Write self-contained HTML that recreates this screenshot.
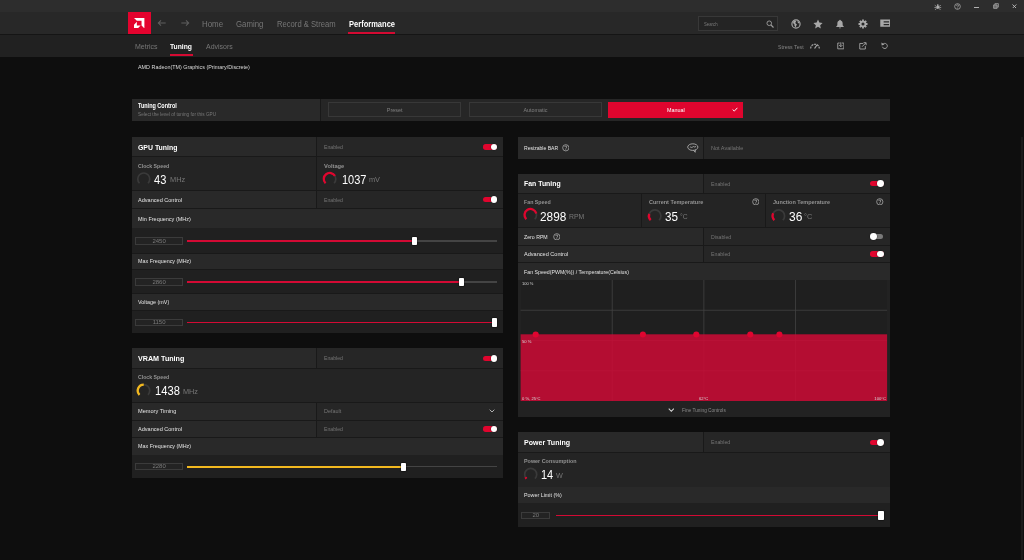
<!DOCTYPE html><html lang="en"><head><meta charset="utf-8"><title>AMD Software - Performance Tuning</title><style>

html,body{margin:0;padding:0;background:#0e0e0e;}
body{width:1024px;height:560px;overflow:hidden;position:relative;font-family:"Liberation Sans", sans-serif;}
#app{position:absolute;left:0;top:0;width:1024px;height:560px;will-change:transform;transform:translateZ(0);}
.b{position:absolute;display:block;}
.t{position:absolute;white-space:nowrap;line-height:1;display:block;transform-origin:0 50%;}

</style></head><body><div id="app">
<div class="b" style="left:0.00px;top:0.00px;width:1024.00px;height:12.30px;background:#2d2d2d;"></div>
<div class="b" style="left:0.00px;top:12.30px;width:1024.00px;height:21.70px;background:#282828;"></div>
<div class="b" style="left:0.00px;top:34.00px;width:1024.00px;height:1.20px;background:#151515;"></div>
<div class="b" style="left:0.00px;top:35.20px;width:1024.00px;height:22.30px;background:#212121;"></div>
<div class="b" style="left:127.90px;top:12.30px;width:23.20px;height:21.70px;background:#e4032e;"></div>
<svg class="b" style="left:134.2px;top:18.1px" width="10.4" height="10.4" viewBox="0 0 10 10"><path fill="#fff" d="M0,0H10V10L7.26,7.26V2.74H2.74Z"/><path fill="#fff" d="M2.74,3.63L0,6.38V10H3.62L6.37,7.25H2.74Z"/></svg>
<svg class="b" style="left:156.90px;top:18.40px" width="10" height="10" viewBox="-5 -5 10 10"><path fill="none" stroke="#5e5e5e" stroke-width="1.05" d="M3.7,0H-3.7M-1.0,-2.7L-3.7,0L-1.0,2.7"/></svg>
<svg class="b" style="left:179.50px;top:18.40px" width="10" height="10" viewBox="-5 -5 10 10"><path fill="none" stroke="#5e5e5e" stroke-width="1.05" d="M-3.7,0H3.7M1.0,-2.7L3.7,0L1.0,2.7"/></svg>
<div class="b" style="left:348.30px;top:32.00px;width:46.50px;height:1.70px;background:#d40a32;"></div>
<div class="b" style="left:169.60px;top:54.40px;width:23.40px;height:1.60px;background:#d40a32;"></div>
<div class="b" style="left:698.2px;top:16.2px;width:79.6px;height:14.7px;box-sizing:border-box;border:1px solid #383838;background:#242424"></div>
<svg class="b" style="left:765.60px;top:19.60px" width="8.00" height="8.00" viewBox="0 0 16 16"><circle cx="6.5" cy="6.5" r="4.6" fill="none" stroke="#9a9a9a" stroke-width="1.9"/><path d="M10,10L15,15" stroke="#9a9a9a" stroke-width="2.3"/></svg>
<svg class="b" style="left:790.50px;top:18.60px" width="10.00" height="10.00" viewBox="0 0 20 20"><circle cx="10" cy="10" r="8.2" fill="none" stroke="#a8a8a8" stroke-width="2.3"/><path fill="#a8a8a8" d="M4.2,5.2L8.6,3.2L10.4,5.6L8.4,7.4L9.8,9.6L12,11L10.4,13.6L9.2,17L7,13.4L6.8,10.6L4.4,8.6Z M12.6,4.4L15.4,4.8L17,8L15.6,9L13.4,7.2Z"/></svg>
<svg class="b" style="left:813.00px;top:18.60px" width="10.00" height="10.00" viewBox="0 0 20 20"><path fill="#a8a8a8" d="M10,1.2L12.7,7.2L19.2,7.9L14.3,12.3L15.7,18.8L10,15.5L4.3,18.8L5.7,12.3L0.8,7.9L7.3,7.2Z"/></svg>
<svg class="b" style="left:835.30px;top:18.60px" width="10.00" height="10.00" viewBox="0 0 20 20"><path fill="#a8a8a8" d="M10,1.5C10.9,1.5 11.5,2.1 11.5,3C14,3.8 15.3,6 15.3,8.8V12.5L17.5,15V16H2.5V15L4.7,12.5V8.8C4.7,6 6,3.8 8.5,3C8.5,2.1 9.1,1.5 10,1.5Z M8.2,17H11.8C11.8,18 11,18.8 10,18.8C9,18.8 8.2,18 8.2,17Z"/></svg>
<svg class="b" style="left:857.50px;top:18.50px" width="10.00" height="10.00" viewBox="0 0 20 20"><path fill="#a8a8a8" fill-rule="evenodd" d="M19.01,8.13L19.01,11.87L16.67,11.77L15.97,13.47L17.69,15.05L15.05,17.69L13.47,15.97L11.77,16.67L11.87,19.01L8.13,19.01L8.23,16.67L6.53,15.97L4.95,17.69L2.31,15.05L4.03,13.47L3.33,11.77L0.99,11.87L0.99,8.13L3.33,8.23L4.03,6.53L2.31,4.95L4.95,2.31L6.53,4.03L8.23,3.33L8.13,0.99L11.87,0.99L11.77,3.33L13.47,4.03L15.05,2.31L17.69,4.95L15.97,6.53L16.67,8.23ZM13.10,10A3.10,3.10 0 1 0 6.90,10A3.10,3.10 0 1 0 13.10,10Z"/></svg>
<svg class="b" style="left:879.60px;top:19.40px" width="10.40" height="8.40" viewBox="0 0 20 16"><path fill="#a8a8a8" fill-rule="evenodd" d="M0.5,1H19.5V15H0.5Z M7,4.2H17.5V6.6H7Z M7,9.4H17.5V11.8H7Z"/></svg>
<svg class="b" style="left:809.90px;top:41.80px" width="10.00" height="7.20" viewBox="0 0 20 13"><path fill="none" stroke="#a4a4a4" stroke-width="2.4" stroke-dasharray="4.1 1.55" d="M1.4,12.4A8.6,8.6 0 0 1 18.6,12.4"/><path stroke="#a4a4a4" stroke-width="2.2" stroke-linecap="round" d="M9.6,11.6L13.4,6"/></svg>
<svg class="b" style="left:836.80px;top:42.10px" width="7.60" height="7.60" viewBox="0 0 16 16"><path fill="none" stroke="#a4a4a4" stroke-width="1.9" d="M5.6,2.2H1.6V14.4H14.4V2.2H10.4"/><path fill="none" stroke="#a4a4a4" stroke-width="1.9" d="M8,0.6V9.6M4.4,6.4L8,10L11.6,6.4"/></svg>
<svg class="b" style="left:858.90px;top:42.00px" width="7.80" height="7.80" viewBox="0 0 16 16"><path fill="none" stroke="#a4a4a4" stroke-width="1.9" d="M8.6,3H1.6V14.4H13V8.4"/><path fill="none" stroke="#a4a4a4" stroke-width="1.9" d="M6.4,9.6L14,2M9.4,1.4H14.6V6.6"/></svg>
<svg class="b" style="left:881.20px;top:42.10px" width="7.60" height="7.60" viewBox="0 0 16 16"><path fill="none" stroke="#a4a4a4" stroke-width="1.9" d="M3.4,5.4A5.4,5.4 0 1 1 2.8,10"/><path fill="#a4a4a4" d="M0.8,1L1.4,7.4L7.4,5.4Z"/></svg>
<svg class="b" style="left:934.30px;top:2.50px" width="7.60" height="7.60" viewBox="0 0 16 16"><ellipse cx="8" cy="9.2" rx="2.9" ry="3.7" fill="#b0b0b0"/><circle cx="8" cy="4.4" r="1.8" fill="#b0b0b0"/><path stroke="#b0b0b0" stroke-width="1.5" fill="none" d="M1.6,4.8L5.4,7.4M14.4,4.8L10.6,7.4M0.8,9.6H5M15.2,9.6H11M1.8,14.6L5.4,11.6M14.2,14.6L10.6,11.6"/></svg>
<svg class="b" style="left:953.70px;top:2.50px" width="7.00" height="7.00" viewBox="0 0 16 16"><circle cx="8" cy="8" r="6.5" fill="none" stroke="#b0b0b0" stroke-width="1.7"/><path fill="none" stroke="#b0b0b0" stroke-width="1.7" d="M5.7,6.4C5.7,3.4 10.3,3.4 10.3,6.2C10.3,8 8,8 8,10"/><circle cx="8" cy="12.2" r="1.05" fill="#b0b0b0"/></svg>
<div class="b" style="left:973.50px;top:6.55px;width:5.60px;height:1.05px;background:#b0b0b0;"></div>
<svg class="b" style="left:993.00px;top:3.20px" width="6.00" height="6.00" viewBox="0 0 14 14"><path fill="#6a6a6a" stroke="#b0b0b0" stroke-width="1.7" d="M1.5,4.4H9.6V12.5H1.5Z"/><path fill="none" stroke="#b0b0b0" stroke-width="1.7" d="M4.4,4V1.5H12.5V9.6H10"/></svg>
<svg class="b" style="left:1012.30px;top:3.70px" width="4.80" height="4.80" viewBox="0 0 12 12"><path stroke="#c0c0c0" stroke-width="2.2" d="M1.2,1.2L10.8,10.8M10.8,1.2L1.2,10.8"/></svg>
<div class="b" style="left:1021.20px;top:137.00px;width:1.60px;height:423.00px;background:#1a1a1a;"></div>
<div class="b" style="left:131.50px;top:98.50px;width:758.50px;height:22.10px;background:#262626;"></div>
<div class="b" style="left:131.50px;top:98.50px;width:189.00px;height:22.10px;background:#292929;"></div>
<div class="b" style="left:320.00px;top:98.50px;width:1.00px;height:22.10px;background:#191919;"></div>
<div class="b" style="left:328.10px;top:101.70px;width:133.10px;height:15.80px;box-sizing:border-box;border:1px solid #383838;background:#272727"></div>
<div class="b" style="left:468.90px;top:101.70px;width:133.20px;height:15.80px;box-sizing:border-box;border:1px solid #383838;background:#272727"></div>
<div class="b" style="left:608.00px;top:101.80px;width:134.60px;height:15.90px;background:#e0052e;"></div>
<svg class="b" style="left:731.60px;top:107.10px" width="6.00" height="5.00" viewBox="0 0 12 10"><path fill="none" stroke="#fff" stroke-width="1.9" d="M1.2,5L4.6,8.2L10.8,1.6"/></svg>
<div class="b" style="left:131.50px;top:137.00px;width:371.80px;height:196.00px;background:#191919;"></div>
<div class="b" style="left:131.50px;top:137.00px;width:185.00px;height:19.40px;background:#292929;"></div>
<div class="b" style="left:316.50px;top:137.00px;width:186.80px;height:19.40px;background:#262626;"></div>
<div class="b" style="left:316.00px;top:137.00px;width:1.00px;height:19.40px;background:#191919;"></div>
<div class="b" style="left:482.90px;top:144.20px;width:14.20px;height:5.40px;background:#e0052e;border-radius:2.7px"></div>
<div class="b" style="left:490.50px;top:143.50px;width:6.8px;height:6.8px;border-radius:50%;background:#fff;box-shadow:0 0 0.8px 0.3px rgba(0,0,0,.55)"></div>
<div class="b" style="left:131.50px;top:157.35px;width:184.50px;height:33.05px;background:#242424;"></div>
<div class="b" style="left:317.00px;top:157.35px;width:186.30px;height:33.05px;background:#242424;"></div>
<svg class="b" style="left:0;top:0" width="1024" height="560" viewBox="0 0 1024 560"><path fill="none" stroke="#3a3a3a" stroke-width="1.7" d="M139.51,183.24A6.00,6.00 0 1 1 147.99,183.24"/></svg>
<svg class="b" style="left:0;top:0" width="1024" height="560" viewBox="0 0 1024 560"><path fill="none" stroke="#3a3a3a" stroke-width="1.7" d="M325.56,183.24A6.00,6.00 0 1 1 334.04,183.24"/><path fill="none" stroke="#e0052e" stroke-width="2.3" d="M325.56,183.24A6.00,6.00 0 1 1 334.96,175.95"/></svg>
<div class="b" style="left:131.50px;top:191.30px;width:185.00px;height:16.50px;background:#292929;"></div>
<div class="b" style="left:316.50px;top:191.30px;width:186.80px;height:16.50px;background:#262626;"></div>
<div class="b" style="left:316.00px;top:191.30px;width:1.00px;height:16.50px;background:#191919;"></div>
<div class="b" style="left:482.90px;top:196.90px;width:14.20px;height:5.40px;background:#e0052e;border-radius:2.7px"></div>
<div class="b" style="left:490.50px;top:196.20px;width:6.8px;height:6.8px;border-radius:50%;background:#fff;box-shadow:0 0 0.8px 0.3px rgba(0,0,0,.55)"></div>
<div class="b" style="left:131.50px;top:208.70px;width:371.80px;height:19.70px;background:#292929;"></div>
<div class="b" style="left:131.50px;top:228.40px;width:371.80px;height:24.80px;background:#202020;"></div>
<div class="b" style="left:135.00px;top:237.20px;width:48.20px;height:7.60px;box-sizing:border-box;border:1px solid #3b3b3b;background:#232323"></div>
<div class="b" style="left:187.30px;top:240.45px;width:309.70px;height:1.10px;background:#444;"></div>
<div class="b" style="left:187.30px;top:240.02px;width:227.00px;height:1.96px;background:#d30a34;"></div>
<div class="b" style="left:411.65px;top:236.90px;width:5.30px;height:8.20px;background:#ffffff;border-radius:0.8px;box-shadow:0 0 0.8px 0.4px rgba(0,0,0,.6)"></div>
<div class="b" style="left:131.50px;top:253.60px;width:371.80px;height:15.90px;background:#292929;"></div>
<div class="b" style="left:131.50px;top:269.50px;width:371.80px;height:23.90px;background:#202020;"></div>
<div class="b" style="left:135.00px;top:278.20px;width:48.20px;height:7.60px;box-sizing:border-box;border:1px solid #3b3b3b;background:#232323"></div>
<div class="b" style="left:187.30px;top:281.45px;width:309.70px;height:1.10px;background:#444;"></div>
<div class="b" style="left:187.30px;top:281.02px;width:274.10px;height:1.96px;background:#d30a34;"></div>
<div class="b" style="left:458.75px;top:277.90px;width:5.30px;height:8.20px;background:#ffffff;border-radius:0.8px;box-shadow:0 0 0.8px 0.4px rgba(0,0,0,.6)"></div>
<div class="b" style="left:131.50px;top:293.80px;width:371.80px;height:16.70px;background:#292929;"></div>
<div class="b" style="left:131.50px;top:310.50px;width:371.80px;height:22.50px;background:#202020;"></div>
<div class="b" style="left:135.00px;top:318.70px;width:48.20px;height:7.60px;box-sizing:border-box;border:1px solid #3b3b3b;background:#232323"></div>
<div class="b" style="left:187.30px;top:321.95px;width:309.70px;height:1.10px;background:#444;"></div>
<div class="b" style="left:187.30px;top:321.52px;width:307.50px;height:1.96px;background:#d30a34;"></div>
<div class="b" style="left:492.15px;top:318.40px;width:5.30px;height:8.20px;background:#ffffff;border-radius:0.8px;box-shadow:0 0 0.8px 0.4px rgba(0,0,0,.6)"></div>
<div class="b" style="left:131.50px;top:348.00px;width:371.80px;height:129.50px;background:#191919;"></div>
<div class="b" style="left:131.50px;top:348.00px;width:185.00px;height:20.40px;background:#292929;"></div>
<div class="b" style="left:316.50px;top:348.00px;width:186.80px;height:20.40px;background:#262626;"></div>
<div class="b" style="left:316.00px;top:348.00px;width:1.00px;height:20.40px;background:#191919;"></div>
<div class="b" style="left:482.90px;top:355.70px;width:14.20px;height:5.40px;background:#e0052e;border-radius:2.7px"></div>
<div class="b" style="left:490.50px;top:355.00px;width:6.8px;height:6.8px;border-radius:50%;background:#fff;box-shadow:0 0 0.8px 0.3px rgba(0,0,0,.55)"></div>
<div class="b" style="left:131.50px;top:369.30px;width:371.80px;height:33.00px;background:#242424;"></div>
<svg class="b" style="left:0;top:0" width="1024" height="560" viewBox="0 0 1024 560"><path fill="none" stroke="#3a3a3a" stroke-width="1.7" d="M139.51,394.84A6.00,6.00 0 1 1 147.99,394.84"/><path fill="none" stroke="#f2b81f" stroke-width="2.3" d="M139.51,394.84A6.00,6.00 0 0 1 143.75,384.60"/></svg>
<div class="b" style="left:131.50px;top:403.20px;width:185.00px;height:16.60px;background:#292929;"></div>
<div class="b" style="left:316.50px;top:403.20px;width:186.80px;height:16.60px;background:#262626;"></div>
<div class="b" style="left:316.00px;top:403.20px;width:1.00px;height:16.60px;background:#191919;"></div>
<svg class="b" style="left:489.00px;top:409.35px" width="6.00" height="3.90" viewBox="0 0 14 9"><path fill="none" stroke="#c8c8c8" stroke-width="2.0" d="M1.5,1.5L7,7L12.5,1.5"/></svg>
<div class="b" style="left:131.50px;top:420.70px;width:185.00px;height:16.40px;background:#292929;"></div>
<div class="b" style="left:316.50px;top:420.70px;width:186.80px;height:16.40px;background:#262626;"></div>
<div class="b" style="left:316.00px;top:420.70px;width:1.00px;height:16.40px;background:#191919;"></div>
<div class="b" style="left:482.90px;top:426.20px;width:14.20px;height:5.40px;background:#e0052e;border-radius:2.7px"></div>
<div class="b" style="left:490.50px;top:425.50px;width:6.8px;height:6.8px;border-radius:50%;background:#fff;box-shadow:0 0 0.8px 0.3px rgba(0,0,0,.55)"></div>
<div class="b" style="left:131.50px;top:438.00px;width:371.80px;height:17.00px;background:#292929;"></div>
<div class="b" style="left:131.50px;top:455.00px;width:371.80px;height:22.50px;background:#202020;"></div>
<div class="b" style="left:135.00px;top:462.80px;width:48.20px;height:7.60px;box-sizing:border-box;border:1px solid #3b3b3b;background:#232323"></div>
<div class="b" style="left:187.30px;top:466.05px;width:309.70px;height:1.10px;background:#444;"></div>
<div class="b" style="left:187.30px;top:465.62px;width:216.20px;height:1.96px;background:#f2b81f;"></div>
<div class="b" style="left:400.85px;top:462.50px;width:5.30px;height:8.20px;background:#ffffff;border-radius:0.8px;box-shadow:0 0 0.8px 0.4px rgba(0,0,0,.6)"></div>
<div class="b" style="left:518.20px;top:137.00px;width:184.80px;height:22.00px;background:#292929;"></div>
<div class="b" style="left:703.00px;top:137.00px;width:187.00px;height:22.00px;background:#262626;"></div>
<div class="b" style="left:702.50px;top:137.00px;width:1.00px;height:22.00px;background:#191919;"></div>
<svg class="b" style="left:561.80px;top:144.20px" width="7.60" height="7.60" viewBox="0 0 16 16"><circle cx="8" cy="8" r="6.6" fill="none" stroke="#c0c0c0" stroke-width="1.4"/><path fill="none" stroke="#c0c0c0" stroke-width="1.5" d="M5.8,6.4C5.8,3.6 10.2,3.6 10.2,6.2C10.2,7.9 8,8 8,9.9"/><circle cx="8" cy="12" r="0.95" fill="#c0c0c0"/></svg>
<svg class="b" style="left:686.60px;top:143.40px" width="12.00" height="10.00" viewBox="0 0 24 20"><ellipse cx="11.6" cy="8.2" rx="10.2" ry="6.6" fill="none" stroke="#b4b4b4" stroke-width="1.7"/><path fill="none" stroke="#b4b4b4" stroke-width="1.6" d="M13,14.6L16.4,18.6L16.8,13.6"/><path fill="none" stroke="#b4b4b4" stroke-width="1.7" d="M5.6,9.4C7.6,5.6 9,11.4 11.4,8C13.6,5 14.6,10.6 18,6.8"/></svg>
<div class="b" style="left:518.20px;top:174.00px;width:371.80px;height:243.20px;background:#191919;"></div>
<div class="b" style="left:518.20px;top:174.00px;width:184.80px;height:19.30px;background:#292929;"></div>
<div class="b" style="left:703.00px;top:174.00px;width:187.00px;height:19.30px;background:#262626;"></div>
<div class="b" style="left:702.50px;top:174.00px;width:1.00px;height:19.30px;background:#191919;"></div>
<div class="b" style="left:869.60px;top:181.00px;width:14.20px;height:5.40px;background:#e0052e;border-radius:2.7px"></div>
<div class="b" style="left:877.20px;top:180.30px;width:6.8px;height:6.8px;border-radius:50%;background:#fff;box-shadow:0 0 0.8px 0.3px rgba(0,0,0,.55)"></div>
<div class="b" style="left:518.20px;top:194.20px;width:122.80px;height:32.90px;background:#242424;"></div>
<div class="b" style="left:642.00px;top:194.20px;width:123.00px;height:32.90px;background:#242424;"></div>
<div class="b" style="left:766.00px;top:194.20px;width:124.00px;height:32.90px;background:#242424;"></div>
<svg class="b" style="left:0;top:0" width="1024" height="560" viewBox="0 0 1024 560"><path fill="none" stroke="#3a3a3a" stroke-width="1.7" d="M526.26,219.24A6.00,6.00 0 1 1 534.74,219.24"/><path fill="none" stroke="#e0052e" stroke-width="2.3" d="M526.26,219.24A6.00,6.00 0 1 1 536.31,213.51"/></svg>
<svg class="b" style="left:0;top:0" width="1024" height="560" viewBox="0 0 1024 560"><path fill="none" stroke="#3a3a3a" stroke-width="1.7" d="M650.66,220.14A6.00,6.00 0 1 1 659.14,220.14"/><path fill="none" stroke="#e0052e" stroke-width="2.3" d="M650.66,220.14A6.00,6.00 0 0 1 649.25,213.87"/></svg>
<svg class="b" style="left:751.90px;top:197.90px" width="7.60" height="7.60" viewBox="0 0 16 16"><circle cx="8" cy="8" r="6.6" fill="none" stroke="#c0c0c0" stroke-width="1.4"/><path fill="none" stroke="#c0c0c0" stroke-width="1.5" d="M5.8,6.4C5.8,3.6 10.2,3.6 10.2,6.2C10.2,7.9 8,8 8,9.9"/><circle cx="8" cy="12" r="0.95" fill="#c0c0c0"/></svg>
<svg class="b" style="left:0;top:0" width="1024" height="560" viewBox="0 0 1024 560"><path fill="none" stroke="#3a3a3a" stroke-width="1.7" d="M774.36,220.14A6.00,6.00 0 1 1 782.84,220.14"/><path fill="none" stroke="#e0052e" stroke-width="2.3" d="M774.36,220.14A6.00,6.00 0 0 1 773.17,213.35"/></svg>
<svg class="b" style="left:876.00px;top:197.90px" width="7.60" height="7.60" viewBox="0 0 16 16"><circle cx="8" cy="8" r="6.6" fill="none" stroke="#c0c0c0" stroke-width="1.4"/><path fill="none" stroke="#c0c0c0" stroke-width="1.5" d="M5.8,6.4C5.8,3.6 10.2,3.6 10.2,6.2C10.2,7.9 8,8 8,9.9"/><circle cx="8" cy="12" r="0.95" fill="#c0c0c0"/></svg>
<div class="b" style="left:518.20px;top:228.00px;width:184.80px;height:16.80px;background:#292929;"></div>
<div class="b" style="left:703.00px;top:228.00px;width:187.00px;height:16.80px;background:#262626;"></div>
<div class="b" style="left:702.50px;top:228.00px;width:1.00px;height:16.80px;background:#191919;"></div>
<svg class="b" style="left:552.70px;top:232.90px" width="7.60" height="7.60" viewBox="0 0 16 16"><circle cx="8" cy="8" r="6.6" fill="none" stroke="#c0c0c0" stroke-width="1.4"/><path fill="none" stroke="#c0c0c0" stroke-width="1.5" d="M5.8,6.4C5.8,3.6 10.2,3.6 10.2,6.2C10.2,7.9 8,8 8,9.9"/><circle cx="8" cy="12" r="0.95" fill="#c0c0c0"/></svg>
<div class="b" style="left:870.40px;top:233.80px;width:12.80px;height:5.40px;background:#7a7a7a;border-radius:2.7px"></div>
<div class="b" style="left:870.30px;top:233.10px;width:6.8px;height:6.8px;border-radius:50%;background:#fff;box-shadow:0 0 0.8px 0.3px rgba(0,0,0,.55)"></div>
<div class="b" style="left:518.20px;top:245.70px;width:184.80px;height:16.40px;background:#292929;"></div>
<div class="b" style="left:703.00px;top:245.70px;width:187.00px;height:16.40px;background:#262626;"></div>
<div class="b" style="left:702.50px;top:245.70px;width:1.00px;height:16.40px;background:#191919;"></div>
<div class="b" style="left:869.60px;top:251.40px;width:14.20px;height:5.40px;background:#e0052e;border-radius:2.7px"></div>
<div class="b" style="left:877.20px;top:250.70px;width:6.8px;height:6.8px;border-radius:50%;background:#fff;box-shadow:0 0 0.8px 0.3px rgba(0,0,0,.55)"></div>
<div class="b" style="left:518.20px;top:263.00px;width:371.80px;height:17.00px;background:#292929;"></div>
<div class="b" style="left:518.20px;top:280.00px;width:371.80px;height:137.20px;background:#222222;"></div>
<div class="b" style="left:520.60px;top:280.00px;width:366.50px;height:121.00px;background:#1f1f1f;"></div>
<svg class="b" style="left:0;top:0" width="1024" height="560" viewBox="0 0 1024 560"><path stroke="#434343" stroke-width="0.8" d="M612.23,280.00V401.00"/><path stroke="#434343" stroke-width="0.8" d="M703.85,280.00V401.00"/><path stroke="#434343" stroke-width="0.8" d="M795.48,280.00V401.00"/><path stroke="#434343" stroke-width="0.8" d="M520.60,310.25H887.10"/><path stroke="#434343" stroke-width="0.8" d="M520.60,340.50H887.10"/><path stroke="#434343" stroke-width="0.8" d="M520.60,370.75H887.10"/><rect x="520.60" y="334.3" width="366.50" height="66.70" fill="#d00a36" fill-opacity="0.84"/><circle cx="535.7" cy="334.5" r="3.05" fill="#df0530"/><circle cx="642.9" cy="334.5" r="3.05" fill="#df0530"/><circle cx="696.3" cy="334.5" r="3.05" fill="#df0530"/><circle cx="750.3" cy="334.5" r="3.05" fill="#df0530"/><circle cx="779.4" cy="334.5" r="3.05" fill="#df0530"/></svg>
<svg class="b" style="left:667.80px;top:407.60px" width="6.60" height="4.20" viewBox="0 0 14 9"><path fill="none" stroke="#d4d4d4" stroke-width="2.3" d="M1.5,1.5L7,7L12.5,1.5"/></svg>
<div class="b" style="left:518.20px;top:432.00px;width:371.80px;height:95.00px;background:#191919;"></div>
<div class="b" style="left:518.20px;top:432.00px;width:184.80px;height:19.80px;background:#292929;"></div>
<div class="b" style="left:703.00px;top:432.00px;width:187.00px;height:19.80px;background:#262626;"></div>
<div class="b" style="left:702.50px;top:432.00px;width:1.00px;height:19.80px;background:#191919;"></div>
<div class="b" style="left:869.60px;top:439.50px;width:14.20px;height:5.40px;background:#e0052e;border-radius:2.7px"></div>
<div class="b" style="left:877.20px;top:438.80px;width:6.8px;height:6.8px;border-radius:50%;background:#fff;box-shadow:0 0 0.8px 0.3px rgba(0,0,0,.55)"></div>
<div class="b" style="left:518.20px;top:452.70px;width:371.80px;height:33.90px;background:#242424;"></div>
<svg class="b" style="left:0;top:0" width="1024" height="560" viewBox="0 0 1024 560"><path fill="none" stroke="#3a3a3a" stroke-width="1.7" d="M526.46,478.64A6.00,6.00 0 1 1 534.94,478.64"/><path fill="none" stroke="#e0052e" stroke-width="2.3" d="M526.46,478.64A6.00,6.00 0 0 1 525.44,477.29"/></svg>
<div class="b" style="left:518.20px;top:487.40px;width:371.80px;height:15.20px;background:#292929;"></div>
<div class="b" style="left:518.20px;top:502.60px;width:371.80px;height:24.40px;background:#202020;"></div>
<div class="b" style="left:521.40px;top:511.70px;width:28.90px;height:7.60px;box-sizing:border-box;border:1px solid #3b3b3b;background:#232323"></div>
<div class="b" style="left:555.60px;top:514.95px;width:328.40px;height:1.10px;background:#444;"></div>
<div class="b" style="left:555.60px;top:514.52px;width:325.40px;height:1.96px;background:#d30a34;"></div>
<div class="b" style="left:878.35px;top:511.40px;width:5.30px;height:8.20px;background:#ffffff;border-radius:0.8px;box-shadow:0 0 0.8px 0.4px rgba(0,0,0,.6)"></div>
<span class="t" id="t0" style="font-size:8.60px;color:#767676;top:20.30px;left:202.00px;transform:scaleX(0.9199);">Home</span>
<span class="t" id="t1" style="font-size:8.60px;color:#767676;top:20.30px;left:235.70px;transform:scaleX(0.9072);">Gaming</span>
<span class="t" id="t2" style="font-size:8.60px;color:#767676;top:20.30px;left:276.80px;transform:scaleX(0.8889);">Record &amp; Stream</span>
<span class="t" id="t3" style="font-size:8.60px;color:#ffffff;top:20.30px;font-weight:700;left:348.50px;transform:scaleX(0.8754);">Performance</span>
<span class="t" id="t4" style="font-size:7.40px;color:#777;top:42.60px;left:134.60px;transform:scaleX(0.9485);">Metrics</span>
<span class="t" id="t5" style="font-size:7.40px;color:#ffffff;top:42.60px;font-weight:700;left:170.40px;transform:scaleX(0.9137);">Tuning</span>
<span class="t" id="t6" style="font-size:7.40px;color:#777;top:42.60px;left:205.50px;transform:scaleX(0.9420);">Advisors</span>
<span class="t" id="t7" style="font-size:5.80px;color:#dcdcdc;top:64.60px;left:137.60px;transform:scaleX(0.9313);">AMD Radeon(TM) Graphics (Primary/Discrete)</span>
<span class="t" id="t8" style="font-size:5.20px;color:#7a7a7a;top:21.80px;left:704.00px;transform:scaleX(0.8213);">Search</span>
<span class="t" id="t9" style="font-size:6.20px;color:#868686;top:43.50px;left:777.60px;transform:scaleX(0.8393);">Stress Test</span>
<span class="t" id="t10" style="font-size:6.60px;color:#ffffff;top:103.40px;font-weight:700;left:137.90px;transform:scaleX(0.8297);">Tuning Control</span>
<span class="t" id="t11" style="font-size:4.60px;color:#787878;top:113.20px;left:137.90px;transform:scaleX(1.0228);">Select the level of tuning for this GPU</span>
<span class="t" id="t12" style="font-size:5.40px;color:#808080;top:107.70px;left:394.65px;transform:translateX(-50%);">Preset</span>
<span class="t" id="t13" style="font-size:5.40px;color:#808080;top:107.70px;left:535.50px;transform:translateX(-50%);">Automatic</span>
<span class="t" id="t14" style="font-size:5.40px;color:#ffffff;top:107.70px;left:675.90px;transform:translateX(-50%);">Manual</span>
<span class="t" id="t15" style="font-size:7.30px;color:#ffffff;top:143.85px;font-weight:700;left:137.90px;transform:scaleX(0.9465);">GPU Tuning</span>
<span class="t" id="t16" style="font-size:5.30px;color:#767676;top:145.25px;left:324.20px;transform:scaleX(0.9767);">Enabled</span>
<span class="t" id="t17" style="font-size:5.90px;color:#939393;top:163.50px;font-weight:700;left:137.90px;transform:scaleX(0.8824);">Clock Speed</span>
<span class="t" id="t18" style="font-size:12.30px;color:#ffffff;top:173.85px;left:154.10px;transform:scaleX(0.8986);">43</span>
<span class="t" id="t19" style="font-size:8.00px;color:#787878;top:176.40px;left:169.60px;transform:scaleX(0.9238);">MHz</span>
<span class="t" id="t20" style="font-size:5.90px;color:#939393;top:163.50px;font-weight:700;left:324.20px;transform:scaleX(0.9739);">Voltage</span>
<span class="t" id="t21" style="font-size:12.30px;color:#ffffff;top:173.85px;left:341.50px;transform:scaleX(0.8955);">1037</span>
<span class="t" id="t22" style="font-size:8.00px;color:#787878;top:176.40px;left:369.00px;transform:scaleX(0.9167);">mV</span>
<span class="t" id="t23" style="font-size:5.80px;color:#e4e4e4;top:197.50px;left:137.90px;transform:scaleX(0.9589);">Advanced Control</span>
<span class="t" id="t24" style="font-size:5.30px;color:#767676;top:197.75px;left:324.20px;transform:scaleX(0.9767);">Enabled</span>
<span class="t" id="t25" style="font-size:5.80px;color:#e4e4e4;top:216.80px;left:137.90px;transform:scaleX(0.9482);">Min Frequency (MHz)</span>
<span class="t" id="t26" style="font-size:6.00px;color:#7a7a7a;top:237.80px;left:159.10px;transform:translateX(-50%);">2450</span>
<span class="t" id="t27" style="font-size:5.80px;color:#e4e4e4;top:259.20px;left:137.90px;transform:scaleX(0.9260);">Max Frequency (MHz)</span>
<span class="t" id="t28" style="font-size:6.00px;color:#7a7a7a;top:278.80px;left:159.10px;transform:translateX(-50%);">2860</span>
<span class="t" id="t29" style="font-size:5.80px;color:#e4e4e4;top:299.80px;left:137.90px;transform:scaleX(0.9309);">Voltage (mV)</span>
<span class="t" id="t30" style="font-size:6.00px;color:#7a7a7a;top:319.30px;left:159.10px;transform:translateX(-50%);">1150</span>
<span class="t" id="t31" style="font-size:7.30px;color:#ffffff;top:355.05px;font-weight:700;left:137.90px;transform:scaleX(0.9800);">VRAM Tuning</span>
<span class="t" id="t32" style="font-size:5.30px;color:#767676;top:356.45px;left:324.20px;transform:scaleX(0.9767);">Enabled</span>
<span class="t" id="t33" style="font-size:5.90px;color:#939393;top:374.80px;font-weight:700;left:137.90px;transform:scaleX(0.8824);">Clock Speed</span>
<span class="t" id="t34" style="font-size:12.30px;color:#ffffff;top:385.25px;left:154.60px;transform:scaleX(0.9101);">1438</span>
<span class="t" id="t35" style="font-size:8.00px;color:#787878;top:387.80px;left:183.00px;transform:scaleX(0.9117);">MHz</span>
<span class="t" id="t36" style="font-size:5.80px;color:#e4e4e4;top:409.30px;left:137.90px;transform:scaleX(0.9678);">Memory Timing</span>
<span class="t" id="t37" style="font-size:5.30px;color:#767676;top:409.15px;left:324.20px;transform:scaleX(1.0300);">Default</span>
<span class="t" id="t38" style="font-size:5.80px;color:#e4e4e4;top:426.80px;left:137.90px;transform:scaleX(0.9589);">Advanced Control</span>
<span class="t" id="t39" style="font-size:5.30px;color:#767676;top:427.05px;left:324.20px;transform:scaleX(0.9767);">Enabled</span>
<span class="t" id="t40" style="font-size:5.80px;color:#e4e4e4;top:444.20px;left:137.90px;transform:scaleX(0.9260);">Max Frequency (MHz)</span>
<span class="t" id="t41" style="font-size:6.00px;color:#7a7a7a;top:463.40px;left:159.10px;transform:translateX(-50%);">2280</span>
<span class="t" id="t42" style="font-size:5.80px;color:#e4e4e4;top:145.80px;left:524.20px;transform:scaleX(0.8769);">Resizable BAR</span>
<span class="t" id="t43" style="font-size:5.30px;color:#767676;top:146.05px;left:710.70px;transform:scaleX(1.0477);">Not Available</span>
<span class="t" id="t44" style="font-size:7.30px;color:#ffffff;top:180.35px;font-weight:700;left:524.30px;transform:scaleX(0.9463);">Fan Tuning</span>
<span class="t" id="t45" style="font-size:5.30px;color:#767676;top:181.85px;left:710.70px;transform:scaleX(0.9921);">Enabled</span>
<span class="t" id="t46" style="font-size:5.90px;color:#939393;top:200.40px;font-weight:700;left:524.30px;transform:scaleX(0.8961);">Fan Speed</span>
<span class="t" id="t47" style="font-size:12.30px;color:#ffffff;top:210.85px;left:540.10px;transform:scaleX(0.9613);">2898</span>
<span class="t" id="t48" style="font-size:8.00px;color:#787878;top:213.40px;left:569.00px;transform:scaleX(0.8605);">RPM</span>
<span class="t" id="t49" style="font-size:5.90px;color:#939393;top:200.40px;font-weight:700;left:648.60px;transform:scaleX(0.9354);">Current Temperature</span>
<span class="t" id="t50" style="font-size:12.30px;color:#ffffff;top:210.85px;left:664.60px;transform:scaleX(0.9498);">35</span>
<span class="t" id="t51" style="font-size:8.00px;color:#787878;top:213.40px;left:680.20px;transform:scaleX(0.8459);">°C</span>
<span class="t" id="t52" style="font-size:5.90px;color:#939393;top:200.40px;font-weight:700;left:772.80px;transform:scaleX(0.9294);">Junction Temperature</span>
<span class="t" id="t53" style="font-size:12.30px;color:#ffffff;top:210.85px;left:788.70px;transform:scaleX(0.9717);">36</span>
<span class="t" id="t54" style="font-size:8.00px;color:#787878;top:213.40px;left:804.40px;transform:scaleX(0.9238);">°C</span>
<span class="t" id="t55" style="font-size:5.80px;color:#e4e4e4;top:234.50px;left:524.30px;transform:scaleX(0.8970);">Zero RPM</span>
<span class="t" id="t56" style="font-size:5.30px;color:#767676;top:234.75px;left:710.70px;transform:scaleX(0.9794);">Disabled</span>
<span class="t" id="t57" style="font-size:5.80px;color:#e4e4e4;top:252.00px;left:524.30px;transform:scaleX(0.9611);">Advanced Control</span>
<span class="t" id="t58" style="font-size:5.30px;color:#767676;top:252.25px;left:710.70px;transform:scaleX(0.9921);">Enabled</span>
<span class="t" id="t59" style="font-size:5.80px;color:#e4e4e4;top:269.60px;left:524.30px;transform:scaleX(0.9079);">Fan Speed(PWM(%)) / Temperature(Celsius)</span>
<span class="t" id="t60" style="font-size:4.20px;color:#d6d6d6;top:282.40px;left:522.00px;transform:scaleX(0.9600);">100 %</span>
<span class="t" id="t61" style="font-size:4.20px;color:#d6d6d6;top:339.50px;left:522.00px;transform:scaleX(0.9846);">50 %</span>
<span class="t" id="t62" style="font-size:4.20px;color:#d6d6d6;top:396.60px;left:522.00px;transform:scaleX(0.9838);">0 %, 25°C</span>
<span class="t" id="t63" style="font-size:4.20px;color:#d6d6d6;top:396.60px;left:699.30px;transform:scaleX(0.9937);">62°C</span>
<span class="t" id="t64" style="font-size:4.20px;color:#d6d6d6;top:396.60px;left:874.30px;">100°C</span>
<span class="t" id="t65" style="font-size:5.10px;color:#8a8a8a;top:407.85px;left:682.10px;transform:scaleX(0.9319);">Fine Tuning Controls</span>
<span class="t" id="t66" style="font-size:7.30px;color:#ffffff;top:439.05px;font-weight:700;left:524.30px;transform:scaleX(0.9643);">Power Tuning</span>
<span class="t" id="t67" style="font-size:5.30px;color:#767676;top:440.35px;left:710.70px;transform:scaleX(0.9921);">Enabled</span>
<span class="t" id="t68" style="font-size:5.90px;color:#939393;top:458.80px;font-weight:700;left:524.30px;transform:scaleX(0.9165);">Power Consumption</span>
<span class="t" id="t69" style="font-size:12.30px;color:#ffffff;top:469.05px;left:541.10px;transform:scaleX(0.8913);">14</span>
<span class="t" id="t70" style="font-size:8.00px;color:#787878;top:471.60px;left:556.20px;transform:scaleX(0.8992);">W</span>
<span class="t" id="t71" style="font-size:5.80px;color:#e4e4e4;top:493.00px;left:524.30px;transform:scaleX(0.9237);">Power Limit (%)</span>
<span class="t" id="t72" style="font-size:6.00px;color:#7a7a7a;top:512.30px;left:535.85px;transform:translateX(-50%);">20</span>
</div></body></html>
